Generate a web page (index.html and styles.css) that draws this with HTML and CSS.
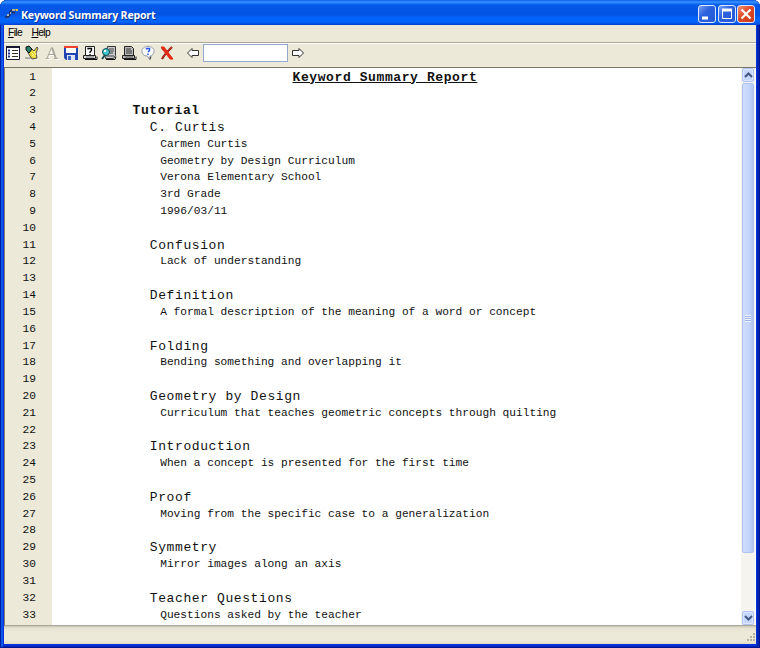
FILE: index.html
```html
<!DOCTYPE html>
<html lang="en">
<head>
<meta charset="utf-8">
<title>Keyword Summary Report</title>
<link rel="stylesheet" href="styles.css">
</head>
<body>
<div class="window">
  <header class="titlebar">
    <svg class="app-icon" width="16" height="16" viewBox="0 0 16 16"><path d="M1 11h3l2-2V6l2-2h4M8 6l3 1" fill="none" stroke="#282c50" stroke-width="1.500"/><path d="M8 4h3M3 9h2M6 7h1" stroke="#ddd8bd" stroke-width="1.500"/><path d="M11 3h3v2h-2z" fill="#f0c63a"/><path d="M3 13h2m4-1h2" stroke="#3e65b8"/></svg>
    <h1>Keyword Summary Report</h1>
    <div class="controls">
      <span class="ctl"><svg width="18" height="18"><path d="M4 13h6" stroke="#fff" stroke-width="3"/></svg></span>
      <span class="ctl"><svg width="18" height="18"><path d="M4.500 4v9.500h9V4" fill="none" stroke="#fff"/><path d="M4 5h10" stroke="#fff" stroke-width="3"/></svg></span>
      <span class="ctl close"><svg width="18" height="18"><path d="M4.500 4.500l9 9m0-9l-9 9" stroke="#fff" stroke-width="2.200"/></svg></span>
    </div>
  </header>
  <nav class="menu"><span><u>F</u>ile</span><span><u>H</u>elp</span></nav>
  <div class="toolbar">
    <svg width="16" height="16" viewBox="0 0 16 16"><path d="M1.500 1.500h13v13h-13z" fill="#fff" stroke="#181830"/><path d="M1 2h14" stroke="#181830" stroke-width="2"/><path d="M3 5.500h2m-2 3h2m-2 3h2" stroke="#26368c" stroke-width="2"/><path d="M7 5.500h6m-6 3h6m-6 3h6" stroke="#333"/></svg>
    <svg width="16" height="16" viewBox="0 0 16 16"><path d="M4 2l3 1 3 3 3-4 1 1-2 5 1 5-5 1-4-6z" fill="#e8d52c" stroke="#555"/><path d="M2 2l3-1 3 3-3 4-3-3z" fill="#26806d" stroke="#111"/><path d="M7 7l3 3m0-4l2 4M8 10l3 2" stroke="#fff7a0"/><path d="M1 13h7" stroke="#777"/></svg>
    <svg width="16" height="16" viewBox="0 0 16 16"><path d="M3 13.500L8 3l4.500 10.500M5 9.500h6M1.500 13.500H6m4 0h5" fill="none" stroke="#fff" transform="translate(1 1)"/><path d="M3 13.500L7.500 2.500M5 9.500h5M1.500 13.500H5m5 0h4" fill="none" stroke="#aaa69a"/><path d="M8 2.500l4 11" stroke="#aaa69a" stroke-width="2"/></svg>
    <svg width="16" height="16" viewBox="0 0 16 16"><path d="M1 1h14v14H3l-2-2z" fill="#2144b4"/><path d="M3 2h10v6H3z" fill="#fff"/><path d="M1 2h14" stroke="#f04232" stroke-width="2"/><path d="M4 10h8v5H4z" fill="#dce5f7"/><path d="M5 11h3v4H5z" fill="#3a63c4"/></svg>
    <svg width="16" height="16" viewBox="0 0 16 16"><path d="M3.500 10V1.500h9V10" fill="#fff" stroke="#222"/><path d="M6 4.500V3.500h3.500v2L8 7v1m0 1v1" fill="none" stroke="#000" stroke-width="1.300"/><path d="M1.500 10.500h12v3h-12z" fill="#ddd" stroke="#222"/><path d="M3 14.500h12v-3" fill="none" stroke="#111"/><path d="M4 12h8" stroke="#777"/></svg>
    <svg width="16" height="16" viewBox="0 0 16 16"><path d="M6.500 1.500h8v9l-2 3h-8z" fill="#ccc" stroke="#333"/><path d="M8 4h5M8 6h5m-5 2h4m-6 3h7" stroke="#444"/><path d="M5 14.500h9l1-3" fill="none" stroke="#111"/><circle cx="5" cy="7" r="3.500" fill="#43c7ce" stroke="#164c57"/><path d="M3 6h2" stroke="#fff" stroke-width="2"/><path d="M4 10l-3 4" stroke="#174b50" stroke-width="2"/></svg>
    <svg width="16" height="16" viewBox="0 0 16 16"><path d="M3.500 10V1.500h7l2 2V10" fill="#bbb" stroke="#222"/><path d="M5 4h5m-5 2h6M5 8h6" stroke="#333"/><path d="M1.500 10.500h12v3h-12z" fill="#bbb" stroke="#222"/><path d="M3 14.500h12v-3" fill="none" stroke="#111"/><path d="M4 12h8" stroke="#555"/></svg>
    <svg width="16" height="16" viewBox="0 0 16 16"><path d="M8 1.500c4 0 6 2 6 5s-2 4-4 4.500L9.500 14.500l-2-3.500C4 11 2 9.500 2 6.500c0-3 2-5 6-5z" fill="#fff" stroke="#9299a8"/><path d="M11 11.500l-1 3" stroke="#333"/><path d="M6.500 4.500v-1h3v2L8 7m0 1.500V10" fill="none" stroke="#2456dd" stroke-width="1.500"/></svg>
    <svg width="16" height="16" viewBox="0 0 16 16"><path d="M3 3c3 3 6 6 10 11M13 2C8 7 5 10 3 14" fill="none" stroke="#7a1712" stroke-width="2"/><path d="M2 2h3l9 12h-3zM13 2L2.500 13.500" fill="#e52c16" stroke="#e52c16"/></svg>
    <svg class="prev" width="14" height="14" viewBox="0 0 14 14"><path d="M1.500 7L6 2.500v2h6.500v5H6v2z" fill="#fff" stroke="#333"/></svg>
    <input type="text" aria-label="Find">
    <svg class="next" width="14" height="14" viewBox="0 0 14 14"><path d="M12.500 7L8 2.500v2H1.500v5H8v2z" fill="#fff" stroke="#333"/></svg>
  </div>
  <main class="viewer">
    <div class="report">
      <div class="line"><b>1</b><span class="title">Keyword Summary Report</span></div>
      <div class="line"><b>2</b></div>
      <div class="line"><b>3</b><span class="project">Tutorial</span></div>
      <div class="line"><b>4</b><span class="key">C. Curtis</span></div>
      <div class="line"><b>5</b><span class="text">Carmen Curtis</span></div>
      <div class="line"><b>6</b><span class="text">Geometry by Design Curriculum</span></div>
      <div class="line"><b>7</b><span class="text">Verona Elementary School</span></div>
      <div class="line"><b>8</b><span class="text">3rd Grade</span></div>
      <div class="line"><b>9</b><span class="text">1996/03/11</span></div>
      <div class="line"><b>10</b></div>
      <div class="line"><b>11</b><span class="key">Confusion</span></div>
      <div class="line"><b>12</b><span class="text">Lack of understanding</span></div>
      <div class="line"><b>13</b></div>
      <div class="line"><b>14</b><span class="key">Definition</span></div>
      <div class="line"><b>15</b><span class="text">A formal description of the meaning of a word or concept</span></div>
      <div class="line"><b>16</b></div>
      <div class="line"><b>17</b><span class="key">Folding</span></div>
      <div class="line"><b>18</b><span class="text">Bending something and overlapping it</span></div>
      <div class="line"><b>19</b></div>
      <div class="line"><b>20</b><span class="key">Geometry by Design</span></div>
      <div class="line"><b>21</b><span class="text">Curriculum that teaches geometric concepts through quilting</span></div>
      <div class="line"><b>22</b></div>
      <div class="line"><b>23</b><span class="key">Introduction</span></div>
      <div class="line"><b>24</b><span class="text">When a concept is presented for the first time</span></div>
      <div class="line"><b>25</b></div>
      <div class="line"><b>26</b><span class="key">Proof</span></div>
      <div class="line"><b>27</b><span class="text">Moving from the specific case to a generalization</span></div>
      <div class="line"><b>28</b></div>
      <div class="line"><b>29</b><span class="key">Symmetry</span></div>
      <div class="line"><b>30</b><span class="text">Mirror images along an axis</span></div>
      <div class="line"><b>31</b></div>
      <div class="line"><b>32</b><span class="key">Teacher Questions</span></div>
      <div class="line"><b>33</b><span class="text">Questions asked by the teacher</span></div>
    </div>
    <div class="scrollbar">
      <span class="arrow"><svg width="11" height="14"><path d="M2 9l3.500-3.500L9 9" fill="none" stroke="#435783" stroke-width="2"/></svg></span>
      <span class="thumb"><i></i></span>
      <span class="track"></span>
      <span class="arrow"><svg width="11" height="14"><path d="M2 5l3.500 3.500L9 5" fill="none" stroke="#435783" stroke-width="2"/></svg></span>
    </div>
  </main>
  <footer class="status"><svg width="12" height="12"><path d="M9 2h2M6 5h2m1 0h2M3 8h2m1 0h2m1 0h2" stroke="#b5b2a2" stroke-width="2"/></svg></footer>
</div>
</body>
</html>
```
FILE: styles.css
```css
* { box-sizing: border-box; }
body { margin: 0; background: #fff; }
svg { display: block; flex: none; }
.window {
  width: 760px; height: 648px; padding: 0 4px 4px;
  display: flex; flex-direction: column; overflow: hidden;
  background: #0831d9;
  border-radius: 7px 7px 0 0;
  box-shadow: inset 1px 0 #001ea0, inset -1px -1px #001690, inset 3px 0 #0a55ec, inset -3px -2px #0325b4;
}
.titlebar {
  height: 25px; margin: 0 -4px; padding: 3px 5px 0 4px; flex: none;
  display: flex; align-items: center;
  background: linear-gradient(#0a5be6 0, #3a92ff 2px, #2080fb 3px, #0459e8 5px, #0355e5 15px, #0265fc 18px, #0264fa 22px, #0042cf 25px);
}
.app-icon { margin-top: -1px; }
h1 {
  margin: 1px auto 0 1px; color: #fff; white-space: nowrap;
  font: bold 10.600px/20px "Open Sans", sans-serif; letter-spacing: -.2px;
  text-shadow: 1px 1px #0b2f90;
}
.controls { display: flex; gap: 1.500px; }
.ctl {
  width: 18px; height: 18px; border: 1px solid #dce8ff; border-radius: 3px;
  background: linear-gradient(135deg, #7ba0f5, #2d62dd 40%, #2459d8);
}
.ctl svg { margin: -1px; }
.close { background: linear-gradient(135deg, #f0977b, #dc4826 45%, #cc3c1b); }
.menu {
  height: 18px; flex: none; padding-left: 4px; display: flex; gap: 9.500px;
  background: #ece9d8; border-bottom: 1px solid #aca899;
  font: 10.300px/16px "Liberation Sans", sans-serif; color: #000;
}
.menu span { letter-spacing: -.65px; }
.menu u { text-underline-offset: 1px; }
.toolbar {
  height: 24px; flex: none; padding: 0 1px 5px; display: flex; align-items: center; gap: 3.300px;
  background: #ece9d8; border-top: 1px solid #fff;
}
.toolbar input {
  width: 85px; height: 18px; padding: 0; border: 1px solid #92a9cf; background: #fff; flex: none;
}
.prev { margin-left: 7px; }
.viewer {
  height: 559px; flex: none; display: flex; background: #fff;
  border-top: 1px solid #77746a; border-left: 1px solid #85816f; border-bottom: 1px solid #aca899;
}
.report {
  flex: 1; overflow: hidden; color: #111; padding-top: .5px;
  font-family: "Liberation Mono", "Courier New", monospace;
  background: linear-gradient(90deg, #ece9d8 47px, #fff 47px);
}
.line { height: 16.820px; line-height: 17px; display: flex; white-space: pre; }
.line b { width: 31px; flex: none; text-align: right; font-size: 11.200px; font-weight: normal; }
.title, .project, .key { font-size: 13px; letter-spacing: .6px; }
.title, .project { font-weight: bold; }
.title { margin-left: 256.500px; text-decoration: underline; }
.project { margin-left: 96.500px; }
.key { margin-left: 113.800px; }
.text { margin-left: 124.200px; font-size: 11.200px; }
.scrollbar {
  width: 15px; padding: 0 1px 0 1px; display: flex; flex-direction: column;
  background: #f5f4ef; border-right: 1px solid #fff;
}
.arrow, .thumb { border: 1px solid #afc2ef; border-radius: 2px; background: #c7d6fb; }
.arrow { height: 14px; flex: none; display: flex; align-items: center; justify-content: center; box-shadow: inset 0 0 0 1px #dce6fd; }
.thumb {
  height: 470px; margin-top: 1px; display: flex; align-items: center; justify-content: center;
  background: linear-gradient(90deg, #d0ddfd, #c4d4fc 60%, #b1c7f5);
}
.thumb i { width: 6px; height: 7px; background: repeating-linear-gradient(#eef4fe 0 1px, #9db5ea 1px 2px); }
.track { flex: 1; }
.status {
  height: 19px; flex: 1; display: flex; justify-content: flex-end; align-items: flex-end;
  background: linear-gradient(#c5c2b3 0, #e6e3d2 2px, #ece9d8 6px, #ece9d8 15px, #dedbc8);
}
```
